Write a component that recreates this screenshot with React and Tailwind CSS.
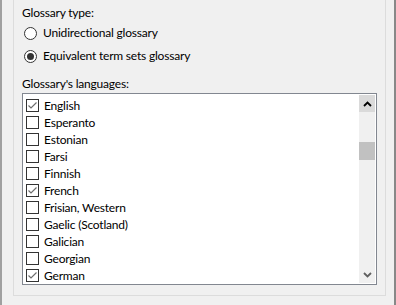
import React from 'react';

const languages = [
  { name: "English", checked: true },
  { name: "Esperanto", checked: false },
  { name: "Estonian", checked: false },
  { name: "Farsi", checked: false },
  { name: "Finnish", checked: false },
  { name: "French", checked: true },
  { name: "Frisian, Western", checked: false },
  { name: "Gaelic (Scotland)", checked: false },
  { name: "Galician", checked: false },
  { name: "Georgian", checked: false },
  { name: "German", checked: true },
];

function Radio({ selected, label }) {
  return (
    <div className="flex items-center h-[22px]">
      <div className="w-[13px] h-[13px] rounded-full border border-[#333] bg-white flex items-center justify-center ml-[2px]">
        {selected && <div className="w-[7px] h-[7px] rounded-full bg-[#333]" />}
      </div>
      <span className="ml-[6px]">{label}</span>
    </div>
  );
}

function CheckRow({ name, checked }) {
  return (
    <div className="flex items-center h-[17px]">
      <div className="w-[13px] h-[13px] border border-[#333] bg-white ml-[2px] flex items-center justify-center">
        {checked && (
          <svg width="11" height="11" viewBox="0 0 11 11">
            <path d="M1.5 5.5 L4 8 L9.5 2.5" stroke="#6d6d6d" strokeWidth="1.2" fill="none" />
          </svg>
        )}
      </div>
      <span className="ml-[5px]">{name}</span>
    </div>
  );
}

function App() {
  return (
    <div
      className="w-[396px] h-[305px] bg-[#f0f0f0] flex text-[12px] tracking-[-0.2px] text-black overflow-hidden"
      style={{ fontFamily: '"Segoe UI", Lato, "Noto Sans", sans-serif' }}
    >
      <div className="w-[2px] bg-[#a0a0a0]" />
      {/* group box */}
      <div className="ml-[11px] w-[373px] h-[296px] border border-t-0 border-[#dcdcdc] pl-[8px] pr-[8px] pt-[4px]">
        <div className="h-[18px] leading-[18px]">Glossary type:</div>
        <Radio selected={false} label="Unidirectional glossary" />
        <div className="h-[1px]" />
        <Radio selected={true} label="Equivalent term sets glossary" />
        <div className="h-[8px]" />
        <div className="h-[17px] leading-[17px]">Glossary's languages:</div>
        <div className="mt-[1px] w-[355px] h-[192px] border border-[#828790] bg-white flex">
          <div className="flex-1 pl-[1px] pt-[3px]">
            {languages.map((l, i) => (
              <CheckRow key={i} name={l.name} checked={l.checked} />
            ))}
          </div>
          <div className="w-[16px] bg-[#f0f0f0] flex flex-col mr-[1px] my-[1px]">
            <div className="h-[17px] bg-[#dadada] flex items-center justify-center">
              <svg width="9" height="6" viewBox="0 0 9 6">
                <path d="M1 5 L4.5 1.5 L8 5" stroke="#000" strokeWidth="1.8" fill="none" />
              </svg>
            </div>
            <div className="h-[30px]" />
            <div className="h-[18px] bg-[#c1c1c1]" />
            <div className="flex-1" />
            <div className="h-[17px] flex items-center justify-center">
              <svg width="9" height="6" viewBox="0 0 9 6">
                <path d="M1 1 L4.5 4.5 L8 1" stroke="#606060" strokeWidth="1.8" fill="none" />
              </svg>
            </div>
          </div>
        </div>
      </div>
      <div className="flex-1" />
      <div className="w-[2px] bg-[#888]" />
    </div>
  );
}

export default App;
